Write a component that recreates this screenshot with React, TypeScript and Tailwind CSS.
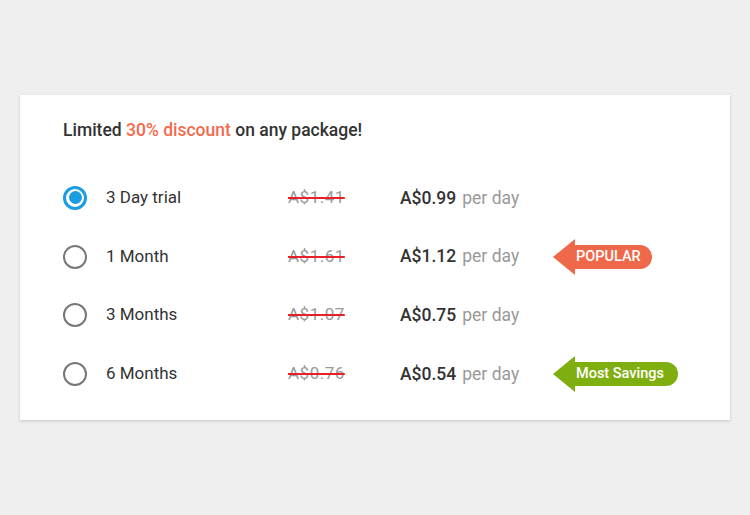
const plans = [
  { name: "3 Day trial", old: "A$1.41", price: "A$0.99", selected: true },
  { name: "1 Month", old: "A$1.61", price: "A$1.12", badge: "popular" },
  { name: "3 Months", old: "A$1.07", price: "A$0.75" },
  { name: "6 Months", old: "A$0.76", price: "A$0.54", badge: "savings" },
];

function Radio({ checked }: { checked?: boolean }) {
  if (checked) {
    return (
      <span className="flex h-[24px] w-[24px] items-center justify-center rounded-full border-[3px] border-[#1b9de2]">
        <span className="h-[13px] w-[13px] rounded-full bg-[#1b9de2]" />
      </span>
    );
  }
  return <span className="block h-[24px] w-[24px] rounded-full border-2 border-[#777]" />;
}

function Badge({ label, color, className }: { label: string; color: string; className: string }) {
  return (
    <div className="flex items-center">
      <svg width="22" height="36" viewBox="0 0 22 36" className="-mr-px">
        <polygon points="0,18 22,0 22,36" fill={color} />
      </svg>
      <span
        className={`flex h-[24px] items-center rounded-r-full pl-[2px] text-[14.5px] font-medium text-white ${className}`}
        style={{ backgroundColor: color }}
      >
        {label}
      </span>
    </div>
  );
}

export default function App() {
  return (
    <div className="flex min-h-[515px] w-full items-start bg-[#efefef] px-[20px] pt-[95px] font-['Roboto',sans-serif]">
      <div className="w-[710px] bg-white pl-[43px] pt-[25px] pb-[17px] shadow-[0_1px_3px_rgba(0,0,0,0.18)]">
        <h2 className="text-[17.5px] leading-[20px] font-medium text-[#333]">
          Limited <span className="text-[#f26b4e]">30% discount</span> on any package!
        </h2>
        <div className="mt-[28.5px]">
          {plans.map((p) => (
            <div key={p.name} className="flex h-[58.7px] items-center">
              <div className="mr-[19px]">
                <Radio checked={p.selected} />
              </div>
              <div className="w-[182px] text-[17px] text-[#333]">{p.name}</div>
              <div className="w-[112px] text-[17px] tracking-[0.5px] text-[#999] line-through decoration-[#e8202a] decoration-2">
                {p.old}
              </div>
              <div className="flex w-[153px] items-baseline gap-[6px] text-[17.5px]">
                <span className="font-medium text-[#333]">{p.price}</span>
                <span className="text-[#999]">per day</span>
              </div>
              {p.badge === "popular" && <Badge label="POPULAR" color="#ef6849" className="pr-[11px]" />}
              {p.badge === "savings" && <Badge label="Most Savings" color="#7fae10" className="pr-[14px]" />}
            </div>
          ))}
        </div>
      </div>
    </div>
  );
}
